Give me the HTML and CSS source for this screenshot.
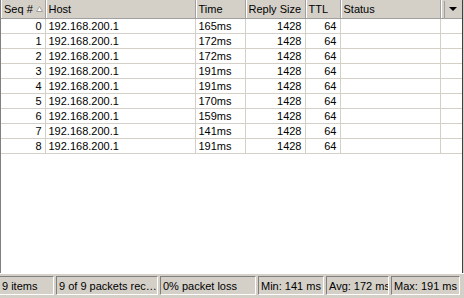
FILE: index.html
```html
<!DOCTYPE html>
<html lang="en">
<head>
  <meta charset="UTF-8" />
  <title>Ping</title>
  <link rel="stylesheet" href="styles.css">
</head>
<body>
  <div class="list">
    <table class="grid">
      <colgroup>
        <col class="c-seq"><col class="c-host"><col class="c-time"><col class="c-size"><col class="c-ttl"><col class="c-status"><col class="c-menu">
      </colgroup>
      <thead>
        <tr>
          <th>Seq # <svg class="sort" width="7" height="6" viewBox="0 0 7 6"><path d="M3.5 0.5 L6.5 5.5 L0.5 5.5 Z" fill="#fff" stroke="#a0a0a0" stroke-width="1"/></svg></th>
          <th>Host</th>
          <th>Time</th>
          <th>Reply Size</th>
          <th>TTL</th>
          <th>Status</th>
          <th class="menu"><span class="menu-btn"><span class="arrow"></span></span></th>
        </tr>
      </thead>
      <tbody>
        <tr><td class="num">0</td><td>192.168.200.1</td><td>165ms</td><td class="num">1428</td><td class="num">64</td><td></td><td></td></tr>
        <tr><td class="num">1</td><td>192.168.200.1</td><td>172ms</td><td class="num">1428</td><td class="num">64</td><td></td><td></td></tr>
        <tr><td class="num">2</td><td>192.168.200.1</td><td>172ms</td><td class="num">1428</td><td class="num">64</td><td></td><td></td></tr>
        <tr><td class="num">3</td><td>192.168.200.1</td><td>191ms</td><td class="num">1428</td><td class="num">64</td><td></td><td></td></tr>
        <tr><td class="num">4</td><td>192.168.200.1</td><td>191ms</td><td class="num">1428</td><td class="num">64</td><td></td><td></td></tr>
        <tr><td class="num">5</td><td>192.168.200.1</td><td>170ms</td><td class="num">1428</td><td class="num">64</td><td></td><td></td></tr>
        <tr><td class="num">6</td><td>192.168.200.1</td><td>159ms</td><td class="num">1428</td><td class="num">64</td><td></td><td></td></tr>
        <tr><td class="num">7</td><td>192.168.200.1</td><td>141ms</td><td class="num">1428</td><td class="num">64</td><td></td><td></td></tr>
        <tr><td class="num">8</td><td>192.168.200.1</td><td>191ms</td><td class="num">1428</td><td class="num">64</td><td></td><td></td></tr>
      </tbody>
    </table>
  </div>

  <div class="statusbar">
    <div class="panel p-items">9 items</div>
    <div class="panel p-recv">9 of 9 packets rec…</div>
    <div class="panel p-loss">0% packet loss</div>
    <div class="panel p-min">Min: 141 ms</div>
    <div class="panel p-avg">Avg: 172 ms</div>
    <div class="panel p-max">Max: 191 ms</div>
  </div>
</body>
</html>
```

FILE: styles.css
```css
body {
  margin: 0;
  width: 464px;
  height: 298px;
  background: #d4d0c8;
  font-family: "Liberation Sans", Arial, sans-serif;
  font-size: 11px;
  color: #000;
  display: flex;
  flex-direction: column;
  overflow: hidden;
}

.list {
  height: 273px;
  margin-right: 1px;
  background: #fff;
  border-left: 1px solid #808080;
  border-right: 1px solid #404040;
  box-sizing: border-box;
  overflow: hidden;
}

.grid {
  border-collapse: collapse;
  table-layout: fixed;
  width: 461px;
}

.c-seq { width: 44px; }
.c-host { width: 150px; }
.c-time { width: 50px; }
.c-size { width: 60px; }
.c-ttl { width: 35px; }
.c-status { width: 100px; }
.c-menu { width: 22px; }

.grid th {
  height: 18px;
  padding: 0 0 0 3px;
  background: #d4d0c8;
  font-weight: normal;
  text-align: left;
  white-space: nowrap;
  overflow: hidden;
  border-right: 1px solid #a0a0a0;
  border-bottom: 1px solid #a0a0a0;
  box-shadow: inset 1px 0 0 #fff;
}

.grid td {
  height: 14px;
  padding: 0 3px;
  border-right: 1px solid #d4d0c8;
  border-bottom: 1px solid #d4d0c8;
  white-space: nowrap;
  overflow: hidden;
  line-height: 14px;
}

.grid td.num {
  text-align: right;
}

.grid th.menu {
  padding: 0 0 0 3px;
  border-right: none;
}

.sort {
  vertical-align: 1px;
}

.menu-btn {
  display: flex;
  align-items: center;
  justify-content: center;
  width: 17px;
  height: 17px;
  border-left: 1px solid #a0a0a0;
}

.arrow {
  width: 0;
  height: 0;
  border-left: 4px solid transparent;
  border-right: 4px solid transparent;
  border-top: 4px solid #000;
}

.statusbar {
  display: flex;
  height: 25px;
  padding: 2px 2px 3px 0;
  border-top: 1px solid #fff;
  box-sizing: border-box;
  gap: 2px;
}

.panel {
  padding: 0 0 0 2px;
  line-height: 19px;
  white-space: nowrap;
  overflow: hidden;
  border-left: 1px solid #808080;
  border-top: 1px solid #808080;
  border-right: 1px solid #fff;
  border-bottom: 1px solid #fff;
  box-sizing: border-box;
}

.p-items { width: 54px; border-left: none; padding-left: 2px; }
.p-recv { width: 102px; }
.p-loss { width: 96px; }
.p-min { width: 66px; }
.p-avg { width: 63px; }
.p-max { width: 69px; }
```
